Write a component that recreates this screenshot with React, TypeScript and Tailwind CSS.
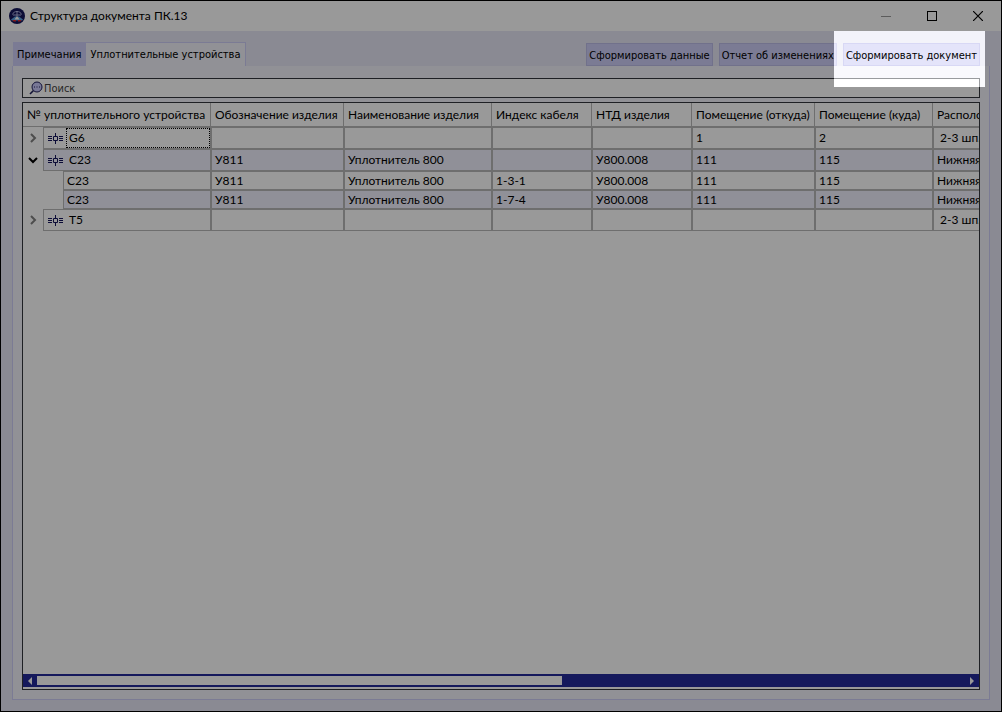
import type { ReactNode } from "react";

type Row = {
  name: string;
  kind: "closed" | "open" | "child";
  tinted?: boolean;
  focused?: boolean;
  cells: string[];
};

const columns = [
  { title: "№ уплотнительного устройства", width: "w-[188px]" },
  { title: "Обозначение изделия", width: "w-[133px]" },
  { title: "Наименование изделия", width: "w-[148px]" },
  { title: "Индекс кабеля", width: "w-[100px]" },
  { title: "НТД изделия", width: "w-[100px]" },
  { title: "Помещение (откуда)", width: "w-[123px]" },
  { title: "Помещение (куда)", width: "w-[118px]" },
  { title: "Расположение", width: "w-[140px]" },
];

const rows: Row[] = [
  {
    name: "G6",
    kind: "closed",
    focused: true,
    cells: ["", "", "", "", "1", "2", " 2-3 шп."],
  },
  {
    name: "С23",
    kind: "open",
    tinted: true,
    cells: ["У811", "Уплотнитель 800", "", "У800.008", "111", "115", "Нижняя"],
  },
  {
    name: "С23",
    kind: "child",
    cells: ["У811", "Уплотнитель 800", "1-3-1", "У800.008", "111", "115", "Нижняя"],
  },
  {
    name: "С23",
    kind: "child",
    tinted: true,
    cells: ["У811", "Уплотнитель 800", "1-7-4", "У800.008", "111", "115", "Нижняя"],
  },
  {
    name: "Т5",
    kind: "closed",
    cells: ["", "", "", "", "", "", " 2-3 шп."],
  },
];

const AppLogo = () => (
  <svg viewBox="0 0 16 16" className="w-4 h-4 shrink-0" aria-hidden="true">
    <circle cx="8" cy="8" r="8" fill="#14175c" />
    <path d="M3.500 6.500C4 4.500 6 3.500 8 3.500s4 1 4.500 3M8 3v5M4 7h8" fill="none" stroke="#b0b4e0" />
    <path d="M2 11.500L6 8.500h4l4 3-1 1H3z" fill="#5aa0e0" />
    <path d="M5.500 11.500L8 8l2.500 3.500z" fill="#fff" />
    <path d="M3.500 12H7v1.500H4.500zM9 12h3.500l-1 1.500H9z" fill="#e03030" />
  </svg>
);

const SearchIcon = () => (
  <svg viewBox="0 0 14 14" className="w-3.5 h-3.5 shrink-0" aria-hidden="true">
    <path d="M4.500 9.500L1 13" stroke="#20205c" strokeWidth="1.600" />
    <circle cx="8" cy="6" r="5" fill="#c8c8fa" stroke="#20205c" />
    <path d="M5 5.500h1v1H5zM7.500 5.500h1v1h-1zM10 5.500h1v1h-1z" fill="#20205c" />
  </svg>
);

const SealIcon = () => (
  <svg viewBox="0 0 15 13" className="w-[15px] h-[13px] shrink-0" aria-hidden="true">
    <path
      d="M0 4.500h4M0 6.500h4M0 8.500h4M11 4.500h4M11 6.500h4M11 8.500h4M7.500 1v3M7.500 9v3M5.500 4.500h4v4h-4z"
      fill="none"
      stroke="#14145c"
    />
  </svg>
);

const Chevron = ({ open }: { open: boolean }) => (
  <svg viewBox="0 0 10 10" className="w-2.5 h-2.5" aria-hidden="true">
    {open ? (
      <path d="M1 3l4 4 4-4" fill="none" stroke="#000" strokeWidth="2" />
    ) : (
      <path d="M3 1l4 4-4 4" fill="none" stroke="#808080" strokeWidth="2" />
    )}
  </svg>
);

const ToolButton = ({ children, active }: { children: ReactNode; active?: boolean }) => (
  <button
    type="button"
    className={`h-[23px] px-0.5 pt-0.5 border whitespace-nowrap leading-4 ${
      active ? "relative z-20 bg-[#e4e4fa] border-[#d8d8f5]" : "bg-[#cecef7] border-[#bcbce8]"
    }`}
  >
    {children}
  </button>
);

const TitleBar = () => (
  <header className="flex items-center h-[30px] pl-2 bg-white">
    <AppLogo />
    <h1 className="ml-[5px]">Структура документа ПК.13</h1>
    <div className="flex ml-auto">
      <button type="button" aria-label="Свернуть" className="flex items-center justify-center w-[46px] h-[30px]">
        <span className="w-2.5 h-px bg-[#999]" />
      </button>
      <button type="button" aria-label="Развернуть" className="flex items-center justify-center w-[46px] h-[30px]">
        <span className="w-2.5 h-2.5 border border-black" />
      </button>
      <button type="button" aria-label="Закрыть" className="flex items-center justify-center w-[46px] h-[30px]">
        <svg viewBox="0 0 10 10" className="w-2.5 h-2.5" aria-hidden="true">
          <path d="M0 0l10 10M10 0L0 10" stroke="#000" strokeWidth="1.200" />
        </svg>
      </button>
    </div>
  </header>
);

const NameCell = ({ row }: { row: Row }) => {
  const bg = row.tinted ? "bg-[#f0f0fe]" : "bg-white";

  if (row.kind === "child") {
    return (
      <div className="flex h-[19px] pl-10">
        <div className={`flex-1 flex items-center pl-[3px] border border-[#b8b8b8] ${bg}`}>{row.name}</div>
      </div>
    );
  }

  return (
    <div className="flex h-[22px]">
      <button
        type="button"
        aria-label={row.kind === "open" ? "Свернуть строку" : "Развернуть строку"}
        className="flex items-center justify-center w-5"
      >
        <Chevron open={row.kind === "open"} />
      </button>
      <div className={`flex-1 flex items-center pl-1 border border-[#b8b8b8] ${bg}`}>
        <SealIcon />
        <span
          className={`flex-1 flex items-center h-full ml-[3px] pl-0.5 border border-dotted ${
            row.focused ? "border-black" : "border-transparent"
          }`}
        >
          {row.name}
        </span>
      </div>
    </div>
  );
};

const DeviceTable = () => (
  <table className="w-[1050px] table-fixed border-separate border-spacing-0 text-left">
    <thead>
      <tr className="h-6">
        {columns.map((col) => (
          <th
            key={col.title}
            className={`${col.width} h-6 p-0 pl-1 font-normal whitespace-nowrap border-r border-b border-[#b8b8b8]`}
          >
            {col.title}
          </th>
        ))}
      </tr>
    </thead>
    <tbody>
      {rows.map((row, idx) => (
        <tr key={idx} className="leading-4">
          <td className="p-0">
            <NameCell row={row} />
          </td>
          {row.cells.map((cell, i) => (
            <td
              key={i}
              className={`p-0 pl-[3px] whitespace-pre border border-[#b8b8b8] ${
                row.tinted ? "bg-[#f0f0fe]" : "bg-white"
              }`}
            >
              {cell}
            </td>
          ))}
        </tr>
      ))}
    </tbody>
  </table>
);

const ScrollBar = () => (
  <div className="flex items-center h-[13px] mb-0.5 bg-[#232b99]">
    <button type="button" aria-label="Прокрутить влево" className="flex items-center justify-center w-3.5 h-full">
      <svg viewBox="0 0 4 8" className="w-1 h-2" aria-hidden="true">
        <path d="M4 0v8L0 4z" fill="#fff" />
      </svg>
    </button>
    <div className="flex-1 h-[9px]">
      <div className="w-[56.6%] h-full bg-white" />
    </div>
    <button type="button" aria-label="Прокрутить вправо" className="flex items-center justify-center w-3.5 h-full">
      <svg viewBox="0 0 4 8" className="w-1 h-2" aria-hidden="true">
        <path d="M0 0v8l4-4z" fill="#fff" />
      </svg>
    </button>
  </div>
);

const App = () => {
  return (
    <div className="flex flex-col h-screen overflow-hidden bg-[#e6e6f5] border border-black text-black text-[12px] font-['Lato','Noto_Sans',sans-serif]">
      <TitleBar />

      <main className="flex-1 flex flex-col min-h-0 px-[11px] pt-[11px] pb-[11px]">
        {/* Tabs and actions */}
        <div className="flex items-end text-[11px] font-['DejaVu_Sans_Condensed','Noto_Sans',sans-serif]">
          <div role="tablist" className="flex items-end ml-px">
            <button
              type="button"
              role="tab"
              aria-selected="false"
              className="h-6 px-1 pt-0.5 bg-[#cecef7] whitespace-nowrap"
            >
              Примечания
            </button>
            <button
              type="button"
              role="tab"
              aria-selected="true"
              className="h-6 px-1 pt-0.5 bg-[#f2f2fa] border border-b-0 border-[#cecef7] whitespace-nowrap"
            >
              Уплотнительные устройства
            </button>
          </div>
          <div className="flex gap-1.5 ml-auto mr-[10px]">
            <ToolButton>Сформировать данные</ToolButton>
            <ToolButton>Отчет об изменениях</ToolButton>
            <div className="relative">
              <ToolButton active>Сформировать документ</ToolButton>
              {/* Spotlight over the last action, everything else is dimmed */}
              <div className="absolute z-10 -top-3 -left-[9px] -right-[5px] -bottom-[21px] bg-white/50 pointer-events-none shadow-[0_0_0_2000px_rgba(0,0,0,0.4)]" />
            </div>
          </div>
        </div>

        {/* Panel */}
        <section className="flex-1 flex flex-col min-h-0 px-[9px] pt-3 pb-[9px] bg-[#f2f2fa] border border-t-0 border-[#cecef7]">
          <label className="flex items-center h-5 pl-1.5 bg-white border border-[#33363c] text-[11px] font-['DejaVu_Sans_Condensed','Noto_Sans',sans-serif]">
            <SearchIcon />
            <input
              type="text"
              aria-label="Поиск"
              placeholder="Поиск"
              className="flex-1 min-w-0 ml-px pt-0.5 bg-transparent outline-none placeholder:text-[#444]"
            />
          </label>

          <div className="flex-1 flex flex-col min-h-0 mt-1 bg-white border border-[#33363c]">
            <div className="flex-1 min-h-0 overflow-hidden">
              <DeviceTable />
            </div>
            <ScrollBar />
          </div>
        </section>
      </main>
    </div>
  );
};

export default App;
